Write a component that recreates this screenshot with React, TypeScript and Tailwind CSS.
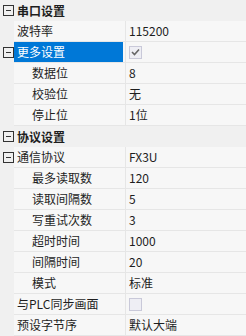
import React from "react";

type Row =
  | { kind: "cat"; label: string }
  | { kind: "prop"; label: string; value?: string; check?: boolean; indent?: boolean; expand?: boolean; selected?: boolean };

const ROWS: Row[] = [
  { kind: "cat", label: "串口设置" },
  { kind: "prop", label: "波特率", value: "115200" },
  { kind: "prop", label: "更多设置", check: true, expand: true, selected: true },
  { kind: "prop", label: "数据位", value: "8", indent: true },
  { kind: "prop", label: "校验位", value: "无", indent: true },
  { kind: "prop", label: "停止位", value: "1位", indent: true },
  { kind: "cat", label: "协议设置" },
  { kind: "prop", label: "通信协议", value: "FX3U", expand: true },
  { kind: "prop", label: "最多读取数", value: "120", indent: true },
  { kind: "prop", label: "读取间隔数", value: "5", indent: true },
  { kind: "prop", label: "写重试次数", value: "3", indent: true },
  { kind: "prop", label: "超时时间", value: "1000", indent: true },
  { kind: "prop", label: "间隔时间", value: "20", indent: true },
  { kind: "prop", label: "模式", value: "标准", indent: true },
  { kind: "prop", label: "与PLC同步画面", check: false },
  { kind: "prop", label: "预设字节序", value: "默认大端" },
];

function Minus() {
  return (
    <svg width="11" height="11" viewBox="0 0 11 11" className="block">
      <rect x="0.5" y="0.5" width="10" height="10" fill="none" stroke="#333" />
      <line x1="3" y1="5.5" x2="8" y2="5.5" stroke="#333" />
    </svg>
  );
}

function Check({ on }: { on: boolean }) {
  return (
    <div className="w-[13px] h-[13px] border border-[#c9c9d9] bg-[#eeeef4] flex items-center justify-center">
      {on && (
        <svg width="9" height="8" viewBox="0 0 9 8">
          <path d="M1 4 L3.5 6.5 L8 1.5" fill="none" stroke="#666" strokeWidth="1.6" />
        </svg>
      )}
    </div>
  );
}

export default function App() {
  return (
    <div
      className="w-[246px] h-[336px] bg-[#f0f0f0] text-[12px] text-[#1e1e1e] overflow-hidden"
      style={{ fontFamily: '"Microsoft YaHei", "Noto Sans CJK SC", sans-serif' }}
    >
      {ROWS.map((r, i) => {
        if (r.kind === "cat") {
          return (
            <div key={i} className="flex h-[21px] items-center">
              <div className="w-[14px] flex justify-center pl-[2px]">
                <Minus />
              </div>
              <span className="pl-[3px] font-bold leading-none">{r.label}</span>
            </div>
          );
        }
        return (
          <div key={i} className="flex h-[21px]">
            <div className="w-[14px] flex items-center justify-center pl-[2px]">
              {r.expand && <Minus />}
            </div>
            <div
              className={
                "w-[109px] flex items-center border-b border-[#e6e6e6] leading-none " +
                (r.selected ? "bg-[#0078d7] text-white " : "bg-[#f7f7f7] ") +
                (r.indent ? "pl-[18px]" : "pl-[3px]")
              }
            >
              {r.label}
            </div>
            <div className="w-[2px] bg-[#f7f7f7] border-b border-[#e6e6e6]" />
            <div className="flex-1 flex items-center bg-[#f7f7f7] border-b border-l border-[#e6e6e6] pl-[3px] leading-none">
              {r.check !== undefined ? <Check on={r.check} /> : r.value}
            </div>
          </div>
        );
      })}
    </div>
  );
}
